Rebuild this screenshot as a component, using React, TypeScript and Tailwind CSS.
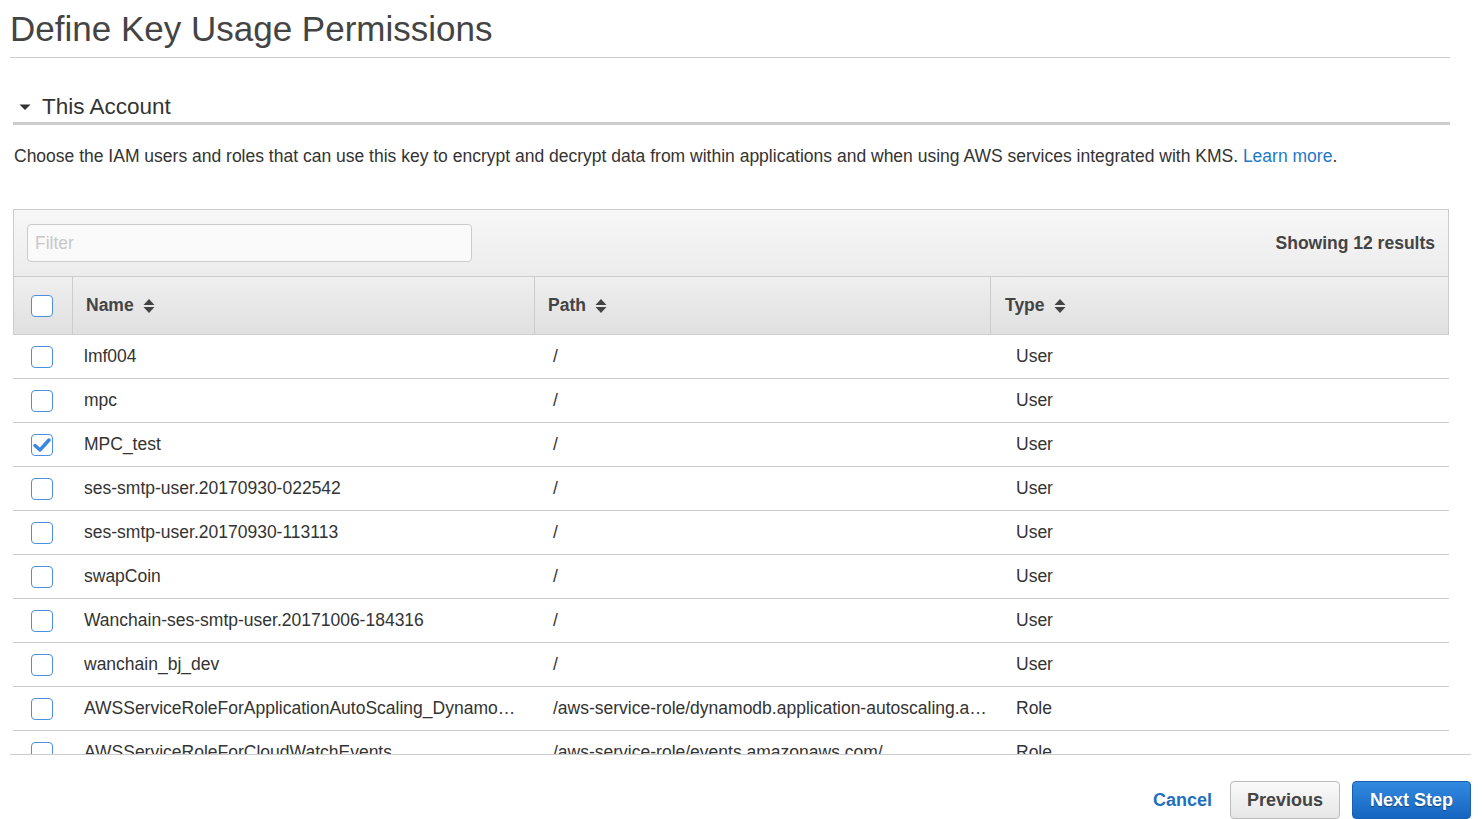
import React from "react";

type Row = { name: string; path: string; type: string; checked?: boolean };

const rows: Row[] = [
  { name: "lmf004", path: "/", type: "User" },
  { name: "mpc", path: "/", type: "User" },
  { name: "MPC_test", path: "/", type: "User", checked: true },
  { name: "ses-smtp-user.20170930-022542", path: "/", type: "User" },
  { name: "ses-smtp-user.20170930-113113", path: "/", type: "User" },
  { name: "swapCoin", path: "/", type: "User" },
  { name: "Wanchain-ses-smtp-user.20171006-184316", path: "/", type: "User" },
  { name: "wanchain_bj_dev", path: "/", type: "User" },
  {
    name: "AWSServiceRoleForApplicationAutoScaling_DynamoDBTable",
    path: "/aws-service-role/dynamodb.application-autoscaling.amazonaws.com/",
    type: "Role",
  },
  {
    name: "AWSServiceRoleForCloudWatchEvents",
    path: "/aws-service-role/events.amazonaws.com/",
    type: "Role",
  },
  {
    name: "AWSServiceRoleForElasticLoadBalancing",
    path: "/aws-service-role/elasticloadbalancing.amazonaws.com/",
    type: "Role",
  },
];

function Box({ checked }: { checked?: boolean }) {
  return (
    <span className="flex h-[22px] w-[22px] items-center justify-center rounded-[4px] border border-[#4a8fe0] bg-white">
      {checked && (
        <svg width="18" height="16" viewBox="0 0 18 16">
          <path
            d="M2 8.5 L7 13 L16 3"
            fill="none"
            stroke="#3a86e0"
            strokeWidth="3.4"
            strokeLinecap="round"
            strokeLinejoin="round"
          />
        </svg>
      )}
    </span>
  );
}

function SortIcon() {
  return (
    <svg width="12" height="16" viewBox="0 0 12 16" className="ml-[9px]">
      <path d="M6 1 L11.5 7 L0.5 7 Z" fill="#444" />
      <path d="M6 15 L11.5 9 L0.5 9 Z" fill="#444" />
    </svg>
  );
}

export default function App() {
  return (
    <div
      className="flex h-[819px] w-[1482px] flex-col overflow-hidden bg-white text-[#444]"
      style={{ fontFamily: '"Liberation Sans", Arial, sans-serif' }}
    >
      <div className="h-[754px] shrink-0 overflow-hidden pl-[10px]">
        <div className="w-[1440px] border-b border-[#ccc] pt-[9px] pb-[8px]">
          <h1 className="text-[35px] leading-[40px] text-[#444]">Define Key Usage Permissions</h1>
        </div>

        <div className="ml-[3px] mt-[36px] w-[1437px] border-b-[3px] border-[#ccc] pb-[2px]">
          <div className="flex items-center">
            <svg width="12" height="8" viewBox="0 0 12 8" className="ml-[6px] mr-[11px]">
              <path d="M0.5 1.5 L11.5 1.5 L6 7 Z" fill="#333" />
            </svg>
            <span className="text-[22.5px] leading-[26px] text-[#333]">This Account</span>
          </div>
        </div>

        <p className="ml-[4px] mt-[20px] text-[17.5px] leading-[22px] text-[#333]">
          Choose the IAM users and roles that can use this key to encrypt and decrypt data from within applications and when using AWS services integrated with KMS.{" "}
          <a className="text-[#1f78c7]">Learn more</a>.
        </p>

        <div className="ml-[3px] mt-[42px] w-[1436px]">
          <div className="flex h-[68px] items-center justify-between border border-[#ccc] bg-gradient-to-b from-[#f7f7f7] to-[#ececec] pl-[13px] pr-[13px]">
            <div className="flex h-[38px] w-[445px] items-center rounded-[4px] border border-[#ccc] bg-[#fafafa] pl-[7px] text-[17.5px] text-[#c8c8c8]">
              Filter
            </div>
            <span className="text-[17.5px] font-bold text-[#444]">Showing 12 results</span>
          </div>

          <div className="grid h-[58px] grid-cols-[58px_462px_456px_1fr] border-x border-b border-[#ccc] bg-gradient-to-b from-[#efefef] to-[#e0e0e0] text-[17.5px] font-bold text-[#444]">
            <div className="flex items-center pl-[17px]">
              <Box />
            </div>
            <div className="flex items-center border-l border-[#ccc] pl-[13px]">
              Name
              <SortIcon />
            </div>
            <div className="flex items-center border-l border-[#ccc] pl-[13px]">
              Path
              <SortIcon />
            </div>
            <div className="flex items-center border-l border-[#ccc] pl-[14px]">
              Type
              <SortIcon />
            </div>
          </div>

          {rows.map((r) => (
            <div
              key={r.name}
              className="grid h-[44px] grid-cols-[59px_462px_456px_1fr] items-center border-b border-[#ccc] text-[17.5px] text-[#333]"
            >
              <div className="flex items-center pl-[18px]">
                <Box checked={r.checked} />
              </div>
              <div className="truncate pl-[12px] pr-[16px]">{r.name}</div>
              <div className="truncate pl-[19px] pr-[2px]">{r.path}</div>
              <div className="pl-[26px]">{r.type}</div>
            </div>
          ))}
        </div>
      </div>

      <div className="ml-[10px] flex w-[1461px] flex-1 items-start justify-end border-t border-[#ccc] pt-[26px]">
        <a className="mr-[18px] mt-[6px] text-[18px] font-bold text-[#1f6fbf]">Cancel</a>
        <button className="mr-[12px] h-[38px] w-[110px] rounded-[4px] border border-[#bbb] bg-gradient-to-b from-[#fafafa] to-[#e6e6e6] text-[18px] font-bold text-[#444]">
          Previous
        </button>
        <button className="h-[38px] w-[119px] rounded-[4px] border border-[#1a5fb0] bg-gradient-to-b from-[#3289e0] to-[#1566c0] text-[18px] font-bold text-white [text-shadow:0_1px_1px_rgba(0,0,0,0.4)]">
          Next Step
        </button>
      </div>
    </div>
  );
}
